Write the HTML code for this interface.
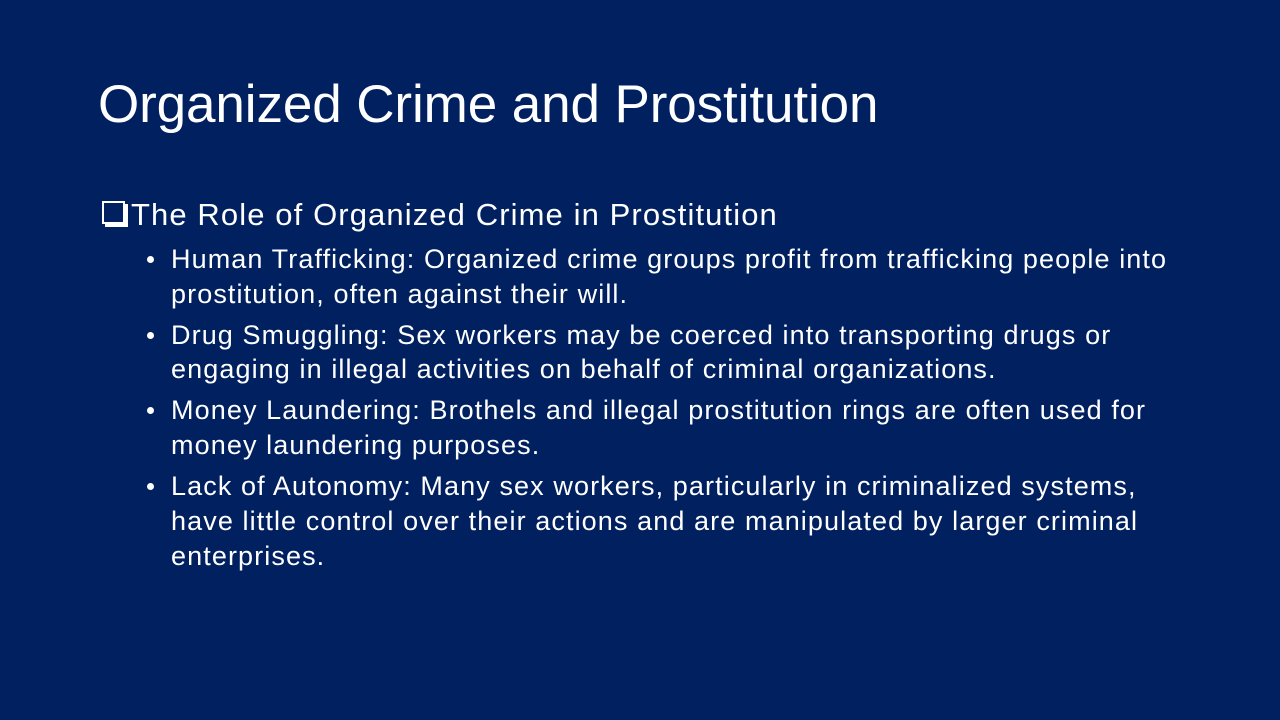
<!DOCTYPE html>
<html><head><style>
body{margin:0;width:1280px;height:720px;background:#002060;overflow:hidden;font-family:"Liberation Sans",sans-serif;color:#fff;position:relative}
.l{position:absolute;white-space:nowrap;line-height:1;}
.t{left:98px;top:78px;font-size:53px;font-weight:300;letter-spacing:-0.1px}
.s{left:131px;top:199px;font-size:31px;letter-spacing:1.1px}
.b{left:171px;font-size:27px;letter-spacing:1.1px}
.d{position:absolute;left:147px;width:7px;height:7px;border-radius:50%;background:#fff}
.cb{position:absolute;left:102px;top:201px;width:19px;height:19px;border:2px solid #fff;box-shadow:3px 3px 0 #fff}
</style></head><body>
<div class="l t">Organized Crime and Prostitution</div>
<div class="cb"></div>
<div class="l s">The Role of Organized Crime in Prostitution</div>
<div class="d" style="top:256px"></div>
<div class="l b" style="top:246px">Human Trafficking: Organized crime groups profit from trafficking people into</div>
<div class="l b" style="top:281px">prostitution, often against their will.</div>
<div class="d" style="top:332px"></div>
<div class="l b" style="top:322px">Drug Smuggling: Sex workers may be coerced into transporting drugs or</div>
<div class="l b" style="top:356px">engaging in illegal activities on behalf of criminal organizations.</div>
<div class="d" style="top:407px"></div>
<div class="l b" style="top:397px">Money Laundering: Brothels and illegal prostitution rings are often used for</div>
<div class="l b" style="top:432px">money laundering purposes.</div>
<div class="d" style="top:483px"></div>
<div class="l b" style="top:473px">Lack of Autonomy: Many sex workers, particularly in criminalized systems,</div>
<div class="l b" style="top:508px">have little control over their actions and are manipulated by larger criminal</div>
<div class="l b" style="top:543px">enterprises.</div>
</body></html>
